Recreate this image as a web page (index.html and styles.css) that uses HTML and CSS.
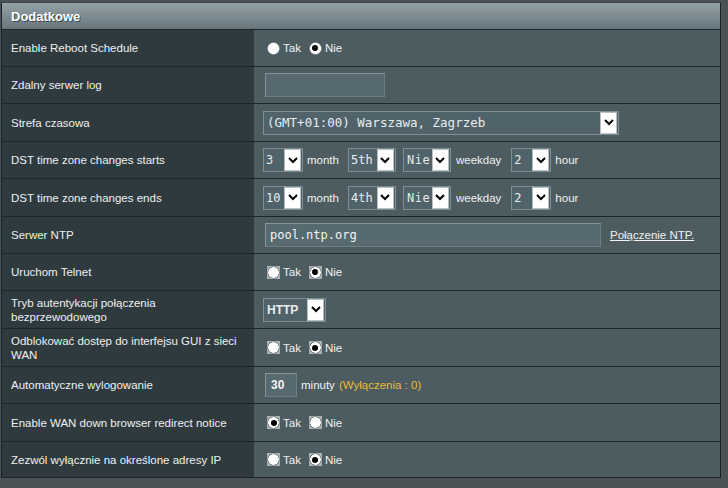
FILE: index.html
```html
<!DOCTYPE html>
<html lang="pl">
<head>
<meta charset="utf-8">
<title>Dodatkowe</title>
<link rel="stylesheet" href="styles.css">
</head>
<body>
<div class="panel">
  <div class="head">Dodatkowe</div>

  <div class="row">
    <div class="lbl">Enable Reboot Schedule</div>
    <div class="val">
      <label class="opt"><span class="radio plain"></span>Tak</label>
      <label class="opt"><span class="radio plain on"></span>Nie</label>
    </div>
  </div>

  <div class="row">
    <div class="lbl">Zdalny serwer log</div>
    <div class="val"><span class="input w-log"></span></div>
  </div>

  <div class="row tall">
    <div class="lbl">Strefa czasowa</div>
    <div class="val">
      <span class="sel w-tz mono big"><span class="sel-v">(GMT+01:00) Warszawa, Zagrzeb</span><span class="arr"><svg width="10" height="7" viewBox="0 0 10 7"><path d="M1 1l4 4 4-4" stroke="#000" stroke-width="2" fill="none"/></svg></span></span>
    </div>
  </div>

  <div class="row">
    <div class="lbl">DST time zone changes starts</div>
    <div class="val">
      <span class="sel w-n mono"><span class="sel-v">3</span><span class="arr"><svg width="10" height="7" viewBox="0 0 10 7"><path d="M1 1l4 4 4-4" stroke="#000" stroke-width="2" fill="none"/></svg></span></span>
      <span class="txt m1">month</span>
      <span class="sel w-w mono"><span class="sel-v">5th</span><span class="arr"><svg width="10" height="7" viewBox="0 0 10 7"><path d="M1 1l4 4 4-4" stroke="#000" stroke-width="2" fill="none"/></svg></span></span>
      <span class="sel w-w mono"><span class="sel-v sp">Nie</span><span class="arr"><svg width="10" height="7" viewBox="0 0 10 7"><path d="M1 1l4 4 4-4" stroke="#000" stroke-width="2" fill="none"/></svg></span></span>
      <span class="txt m2">weekday</span>
      <span class="sel w-n mono"><span class="sel-v">2</span><span class="arr"><svg width="10" height="7" viewBox="0 0 10 7"><path d="M1 1l4 4 4-4" stroke="#000" stroke-width="2" fill="none"/></svg></span></span>
      <span class="txt">hour</span>
    </div>
  </div>

  <div class="row tall">
    <div class="lbl">DST time zone changes ends</div>
    <div class="val">
      <span class="sel w-n mono"><span class="sel-v">10</span><span class="arr"><svg width="10" height="7" viewBox="0 0 10 7"><path d="M1 1l4 4 4-4" stroke="#000" stroke-width="2" fill="none"/></svg></span></span>
      <span class="txt m1">month</span>
      <span class="sel w-w mono"><span class="sel-v">4th</span><span class="arr"><svg width="10" height="7" viewBox="0 0 10 7"><path d="M1 1l4 4 4-4" stroke="#000" stroke-width="2" fill="none"/></svg></span></span>
      <span class="sel w-w mono"><span class="sel-v sp">Nie</span><span class="arr"><svg width="10" height="7" viewBox="0 0 10 7"><path d="M1 1l4 4 4-4" stroke="#000" stroke-width="2" fill="none"/></svg></span></span>
      <span class="txt m2">weekday</span>
      <span class="sel w-n mono"><span class="sel-v">2</span><span class="arr"><svg width="10" height="7" viewBox="0 0 10 7"><path d="M1 1l4 4 4-4" stroke="#000" stroke-width="2" fill="none"/></svg></span></span>
      <span class="txt">hour</span>
    </div>
  </div>

  <div class="row">
    <div class="lbl">Serwer NTP</div>
    <div class="val">
      <span class="input w-ntp mono">pool.ntp.org</span>
      <a class="link" href="#">Połączenie NTP.</a>
    </div>
  </div>

  <div class="row">
    <div class="lbl">Uruchom Telnet</div>
    <div class="val">
      <label class="opt"><span class="radio"></span>Tak</label>
      <label class="opt"><span class="radio on"></span>Nie</label>
    </div>
  </div>

  <div class="row tall">
    <div class="lbl two">Tryb autentykacji połączenia bezprzewodowego</div>
    <div class="val">
      <span class="sel w-http"><span class="sel-v bold">HTTP</span><span class="arr"><svg width="10" height="7" viewBox="0 0 10 7"><path d="M1 1l4 4 4-4" stroke="#000" stroke-width="2" fill="none"/></svg></span></span>
    </div>
  </div>

  <div class="row tall">
    <div class="lbl two">Odblokować dostęp do interfejsu GUI z sieci WAN</div>
    <div class="val">
      <label class="opt"><span class="radio"></span>Tak</label>
      <label class="opt"><span class="radio on"></span>Nie</label>
    </div>
  </div>

  <div class="row">
    <div class="lbl">Automatyczne wylogowanie</div>
    <div class="val">
      <span class="input w-min bold">30</span>
      <span class="txt">minuty</span>
      <span class="note">(Wyłączenia : 0)</span>
    </div>
  </div>

  <div class="row tall">
    <div class="lbl">Enable WAN down browser redirect notice</div>
    <div class="val">
      <label class="opt"><span class="radio on"></span>Tak</label>
      <label class="opt"><span class="radio"></span>Nie</label>
    </div>
  </div>

  <div class="row last">
    <div class="lbl">Zezwól wyłącznie na określone adresy IP</div>
    <div class="val">
      <label class="opt"><span class="radio"></span>Tak</label>
      <label class="opt"><span class="radio on"></span>Nie</label>
    </div>
  </div>
</div>
</body>
</html>
```

FILE: styles.css
```css
html, body {
  margin: 0;
  padding: 0;
  background: #4b5356;
  font-family: "Liberation Sans", Arial, sans-serif;
  font-size: 11.5px;
  color: #ffffff;
}

.panel {
  margin: 2px 0 0 1px;
  width: 720px;
  box-sizing: border-box;
  border-left: 1px solid #1c2326;
  border-right: 1px solid #1c2326;
  border-top: 1px solid #3a4346;
}

.head {
  height: 27px;
  box-sizing: border-box;
  padding-left: 9px;
  display: flex;
  align-items: center;
  background: linear-gradient(#95a2a7, #66767c);
  border-bottom: 1px solid #1f2629;
  font-size: 13px;
  font-weight: bold;
  color: #fff;
  text-shadow: 1px 1px 0 #3c4649;
}

.row {
  display: flex;
  height: 37px;
  box-sizing: border-box;
  border-bottom: 1px solid #1f2629;
}
.row.tall { height: 38px; }
.row.last { height: 36px; }

.lbl {
  width: 252px;
  flex: none;
  box-sizing: border-box;
  padding: 0 4px 0 9px;
  background: #2f3a3e;
  color: #eef0f0;
  display: flex;
  align-items: center;
  line-height: 14px;
}

.val {
  flex: 1;
  background: #4d5c61;
  display: flex;
  align-items: center;
  padding-left: 11px;
  gap: 4px;
}

.opt {
  display: inline-flex;
  align-items: center;
  margin-right: 2px;
  color: #f0f2f2;
}

.radio {
  width: 13px;
  height: 13px;
  box-sizing: border-box;
  margin: 0 3px 0 2px;
  background: #a9b3b6 radial-gradient(circle, #ffffff 0, #ffffff 5px, #6c7679 5.5px, #a9b3b6 6.5px);
  position: relative;
}
.radio.plain {
  background: radial-gradient(circle, #ffffff 0, #ffffff 5.2px, #9aa4a7 5.8px, rgba(0,0,0,0) 6.5px);
}
.radio.on::after {
  content: "";
  position: absolute;
  left: 3.5px;
  top: 3.5px;
  width: 6px;
  height: 6px;
  border-radius: 50%;
  background: #000;
}

.input {
  height: 24px;
  box-sizing: border-box;
  border: 1px solid #86959a;
  border-right-color: #6d7d82;
  border-bottom-color: #6d7d82;
  background: #566a70;
  display: inline-flex;
  align-items: center;
  padding-left: 4px;
  color: #f4f4f4;
}
.w-log { width: 120px; }
.w-ntp { width: 336px; font-size: 11.5px; }
.w-min { width: 32px; padding-left: 5px; font-size: 12px; }

.mono {
  font-family: "DejaVu Sans Mono", "Liberation Mono", monospace;
  font-size: 12px;
}
.big { font-size: 12.5px; }
.bold { font-weight: bold; }

.sel {
  height: 24px;
  box-sizing: border-box;
  border: 1px solid #7f8e92;
  background: #51636a;
  display: inline-flex;
  align-items: stretch;
  padding: 0 1px 0 0;
  margin-left: -2px;
}
.sel + .txt + .sel { margin-left: 0; }
.sel + .sel { margin-left: 3px; }
.sel-v {
  flex: 1;
  display: flex;
  align-items: center;
  padding-left: 2px;
  color: #e8ecec;
  white-space: nowrap;
  overflow: hidden;
}
.sel-v.sp { letter-spacing: 0.5px; padding-left: 3px; }
.arr {
  width: 17px;
  flex: none;
  background: #ffffff;
  border: 1px solid #b8c0c2;
  box-sizing: border-box;
  display: flex;
  align-items: center;
  justify-content: center;
}
.w-tz { width: 356px; }
.w-tz .sel-v { padding-left: 3px; }
.w-n { width: 40px; }
.w-w { width: 48px; }
.w-http { width: 63px; font-size: 12px; }
.w-http .sel-v { padding-left: 3px; }

.txt { color: #f0f2f2; }
.m1 { margin: 0 5px 0 0; }
.m2 { margin: 0 6px 0 1px; }

.link {
  margin-left: 5px;
  color: #f0f2f2;
  text-decoration: underline;
}

.note { color: #e8b93a; }
```
